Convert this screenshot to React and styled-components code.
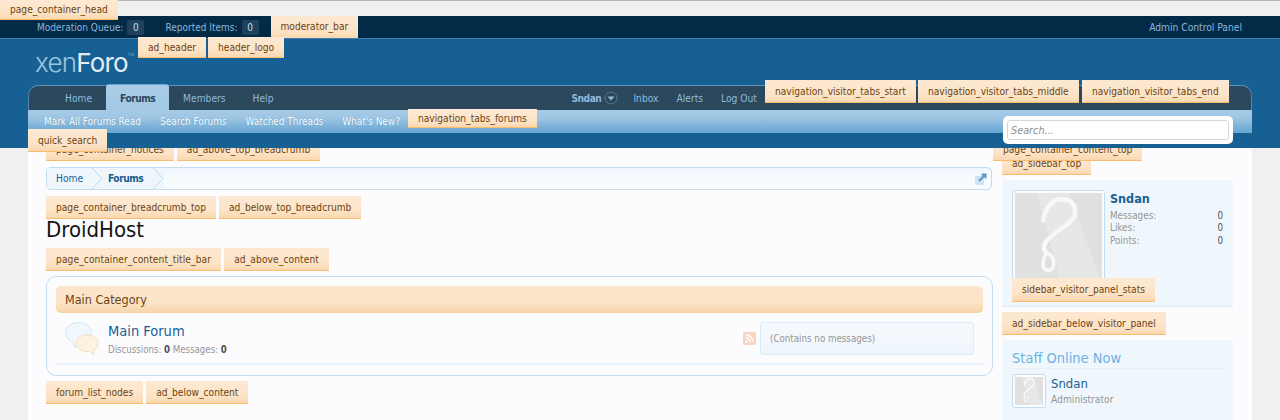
import React from 'react';
import styled, { createGlobalStyle } from 'styled-components';

const GlobalStyle = createGlobalStyle`
  html, body {
    margin: 0;
    padding: 0;
    background: #f0f0f0;
  }
  body {
    font-family: "DejaVu Sans Condensed", "DejaVu Sans", sans-serif;
    font-stretch: condensed;
    font-size: 10.2px;
    color: #141414;
  }
`;

const Page = styled.div`
  height: 420px;
  overflow: hidden;
  position: relative;
`;

const TopStrip = styled.div`
  height: 15px;
  border-top: 1px solid #b4b4b4;
  background: #f0f0f0;
`;

const Tag = styled.div`
  display: inline-flex;
  flex: none;
  align-items: center;
  height: 23px;
  padding: 0 10px;
  box-sizing: border-box;
  background: linear-gradient(to bottom, #fde9d2 0%, #fce4c8 65%, #f9d8b0 100%);
  border-bottom: 1px solid #f9bc6d;
  color: #6d4310;
  font-size: 10.15px;
  letter-spacing: ${(p) => p.$track || 0}px;
  white-space: nowrap;
`;

const FloatTag = styled(Tag)`
  position: absolute;
  left: ${(p) => p.$left}px;
  top: ${(p) => p.$top}px;
  height: ${(p) => p.$height || 23}px;
  z-index: ${(p) => p.$z || 5};
`;

const ModBar = styled.div`
  height: 22px;
  background: #032a46;
  display: flex;
  align-items: center;
  padding: 0 38px 0 37px;
  color: #8ab8dc;
  font-size: 10px;
`;

const ModItem = styled.span`
  display: flex;
  align-items: center;
  gap: 4px;
  margin-right: ${(p) => p.$gap}px;
`;

const Count = styled.span`
  background: #1f435e;
  color: #c4dcee;
  height: 15px;
  line-height: 15px;
  width: 17px;
  text-align: center;
  border-radius: 2px;
`;

const ModSpacer = styled.div`
  flex: 1;
`;

const AdminLink = styled.span`
  font-size: 10.2px;
`;

const Header = styled.header`
  position: relative;
  z-index: 2;
  height: 109px;
  background: #176093;
  border-top: 1px solid #3f7fae;
  padding: 0 28px;
`;

const LogoRow = styled.div`
  height: 46px;
  padding: 9px 0 0 7px;
  box-sizing: border-box;
`;

const Logo = styled.div`
  font-family: Inter, sans-serif;
  font-stretch: normal;
  font-weight: 300;
  font-size: 26px;
  line-height: 30px;
  letter-spacing: -0.8px;
  color: #9fc4de;
  b {
    font-weight: 400;
    color: #e3eef6;
  }
  sup {
    font-size: 4px;
    vertical-align: 16px;
    line-height: 0;
    letter-spacing: 0;
  }
`;

const Nav = styled.nav`
  height: 25px;
  box-sizing: border-box;
  background: #2b485c;
  border-top: 1px solid #5a92bd;
  border-left: 1px solid #4f86ae;
  border-right: 1px solid #4f86ae;
  border-radius: 10px 10px 0 0;
  display: flex;
  align-items: center;
  padding-left: 36px;
  color: #8fbadb;
`;

const NavTab = styled.span`
  margin-right: ${(p) => p.$gap ?? 27}px;
`;

const ActiveTab = styled.span`
  align-self: stretch;
  margin: -2px 14px 0 -13px;
  padding: 2px 0 0 14px;
  width: 63px;
  display: flex;
  align-items: center;
  background: linear-gradient(to bottom, #a9cde7, #a2c8e4);
  border-top: 1px solid #6ea6d0;
  color: #2b485c;
  font-weight: 700;
  letter-spacing: -0.5px;
  border-radius: 3px 3px 0 0;
  box-sizing: border-box;
`;

const NavGap = styled.div`
  width: 298px;
`;

const NavUser = styled.span`
  display: flex;
  align-items: center;
  gap: 3px;
  font-weight: 700;
  letter-spacing: -0.5px;
  margin-right: 15px;
`;

const SubNav = styled.div`
  height: 23px;
  background: linear-gradient(to bottom, #a6cbe7 0%, #9dc5e3 35%, #65a5d1 100%);
  display: flex;
  align-items: center;
  padding-left: 16px;
  gap: 19px;
  color: #fbfdff;
  font-size: 9.95px;
  text-shadow: 0 0 1px #5b93bd;
`;

const SearchBox = styled.div`
  position: absolute;
  left: 1003px;
  top: 77px;
  width: 230px;
  height: 28px;
  box-sizing: border-box;
  padding: 4px;
  background: #fff;
  border-radius: 5px;
  z-index: 3;
`;

const SearchInput = styled.div`
  height: 100%;
  box-sizing: border-box;
  border: 1px solid #d6d6d6;
  border-radius: 3px;
  padding: 0 3px;
  line-height: 19px;
  font-style: italic;
  font-size: 10.8px;
  color: #8f8f8f;
`;

const ContentArea = styled.main`
  margin: 0 28px;
  height: 300px;
  padding: 0 19px 0 18px;
  background: #fcfcff;
  display: flex;
  gap: 10px;
  position: relative;
  z-index: 1;
`;

const MainColumn = styled.section`
  width: 946px;
  margin-top: -10px;
`;

const TagRow = styled.div`
  display: flex;
  gap: 3px;
  height: 23px;
`;

const Breadcrumb = styled.div`
  margin: 6px 0;
  height: 23px;
  box-sizing: border-box;
  border: 1px solid #c2dcf0;
  border-radius: 5px;
  background: linear-gradient(to bottom, #f0f7fc, #fbfdff);
  display: flex;
  align-items: center;
`;

const CrumbTrail = styled.div`
  display: flex;
  align-items: stretch;
  align-self: stretch;
  background: #f0f7fc;
  border-radius: 4px 0 0 4px;
  padding-left: 9px;
`;

const Crumb = styled.span`
  display: flex;
  align-items: center;
  box-sizing: border-box;
  color: #176093;
  font-weight: ${(p) => (p.$current ? 700 : 400)};
  letter-spacing: ${(p) => (p.$current ? -0.5 : 0)}px;
  width: ${(p) => p.$width}px;
  padding-left: ${(p) => p.$pad || 0}px;
`;

const CrumbEdge = styled.svg`
  flex: none;
  display: block;
`;

const JumpIcon = styled.svg`
  margin-left: auto;
  margin-right: 3px;
`;

const PageTitle = styled.h1`
  margin: 0;
  height: 29px;
  font-family: "DejaVu Sans Condensed", "DejaVu Sans", sans-serif;
  font-weight: 400;
  font-size: 22px;
  line-height: 21px;
  color: #141414;
`;

const NodeBox = styled.div`
  margin: 5px 0;
  width: 947px;
  height: 100px;
  box-sizing: border-box;
  padding: 9px 9px 0;
  border: 1px solid #c2dcf0;
  border-radius: 10px;
`;

const CategoryBar = styled.div`
  height: 27px;
  box-sizing: border-box;
  padding: 0 9px;
  display: flex;
  align-items: center;
  border-radius: 5px;
  background: linear-gradient(to bottom, #fbe5cb 0%, #fbe4c9 60%, #f9d6ad 100%);
  border-bottom: 1px solid #f9d0a0;
  color: #6d4310;
  font-size: 12.5px;
`;

const ForumRow = styled.div`
  height: 52px;
  box-sizing: border-box;
  border-bottom: 2px solid #e8f3fc;
  display: flex;
  align-items: flex-start;
  padding: 9px 9px 0 9px;
`;

const ForumIcon = styled.svg`
  flex: none;
  margin-right: 9px;
`;

const ForumInfo = styled.div`
  flex: 1;
`;

const ForumTitle = styled.div`
  color: #176093;
  font-size: 14.5px;
  line-height: 17px;
  margin-top: 1px;
`;

const ForumStats = styled.div`
  color: #969696;
  font-size: 9.6px;
  margin-top: 4px;
  b {
    color: #505050;
  }
`;

const RssIcon = styled.svg`
  margin: 10px 4px 0 0;
  flex: none;
`;

const LastPost = styled.div`
  width: 214px;
  height: 33px;
  box-sizing: border-box;
  padding-left: 9px;
  display: flex;
  align-items: center;
  border: 1px solid #d7edfc;
  border-radius: 3px;
  background: linear-gradient(to bottom, #f6fafe, #eef5fb);
  color: #969696;
  font-size: 9.7px;
`;

const Sidebar = styled.aside`
  width: 231px;
  margin-top: -10px;
  position: relative;
`;

const SidebarTags = styled.div`
  height: 42px;
`;

const SidebarTopTag = styled(Tag)`
  margin-top: 14px;
  padding-top: 1px;
`;

const VisitorPanel = styled.div`
  height: 127px;
  box-sizing: border-box;
  padding: 10px 10px 0;
  background: #f0f7fc;
  border-bottom: 1px solid #d7edfc;
`;

const VisitorMain = styled.div`
  display: flex;
  gap: 5px;
`;

const Avatar = styled.div`
  flex: none;
  width: ${(p) => p.$size}px;
  height: ${(p) => p.$size}px;
  box-sizing: border-box;
  border: 1px solid #c2dcf0;
  padding: 2px;
  background: #fcfcff;
  border-radius: 3px;
  svg {
    display: block;
    width: 100%;
    height: 100%;
  }
`;

const VisitorInfo = styled.div`
  flex: 1;
`;

const VisitorName = styled.div`
  font-size: 12.5px;
  font-weight: 700;
  color: #176093;
  line-height: 17px;
  margin-bottom: 3px;
`;

const StatRow = styled.div`
  display: flex;
  justify-content: space-between;
  height: 12.3px;
  line-height: 12.3px;
  font-size: 9.8px;
  color: #969696;
  b {
    font-weight: 400;
    color: #505050;
  }
`;

const PanelTag = styled(Tag)`
  position: relative;
  height: 24px;
  margin-top: -5px;
`;

const SidebarTagRow = styled.div`
  margin: 5px 0;
  height: 23px;
  display: flex;
`;

const StaffPanel = styled.div`
  height: 90px;
  padding: 10px;
  background: #f0f7fc;
`;

const StaffHeading = styled.h3`
  margin: 0 0 5px;
  padding-bottom: 1px;
  border-bottom: 1px solid #e3f0fa;
  font-weight: 400;
  font-size: 14.5px;
  line-height: 17px;
  color: #6cb2e4;
`;

const StaffRow = styled.div`
  display: flex;
  gap: 5px;
`;

const StaffName = styled.div`
  font-size: 13px;
  color: #176093;
  line-height: 16px;
  margin-top: 2px;
`;

const StaffRole = styled.div`
  color: #969696;
  margin-top: 2px;
`;

function AvatarImage() {
  return (
    <svg viewBox="0 0 96 96" preserveAspectRatio="none">
      <rect width="96" height="96" fill="#e0e0e0" />
      <polygon points="24,0 60,0 94,96 50,96" fill="#e7e7e7" />
      <path
        d="M31 30 C33 18 40 8 50 7 C62 6 68 14 66 24 C63 36 38 44 33 56 C31 60 32 64 35 66"
        fill="none"
        stroke="#f8f8f8"
        strokeWidth="5"
        strokeLinecap="round"
      />
      <path d="M35 66 C42 68 44 76 42 82 C39 88 32 86 31 80 C30 74 33 70 35 66 Z" fill="none" stroke="#f8f8f8" strokeWidth="4" />
    </svg>
  );
}

function Bubbles() {
  return (
    <ForumIcon width="34" height="34" viewBox="0 0 34 34">
      <path
        d="M14 0.5 C21 0.5 26 5 26 11 C26 17 21 22 14 22 L12 23 L10 26 L8.5 20.5 C3.5 18.5 0.5 15 0.5 11 C0.5 5 6 0.5 14 0.5 Z"
        fill="#f0f7fd"
        stroke="#d5e7f5"
      />
      <path
        d="M22 13 C28.5 13 33 16.5 33 21 C33 24 31.5 26.5 29 28 L28.5 32.5 L24.5 29.5 L22 29.5 C16 29.5 11.5 26 11.5 21 C11.5 16.5 16 13 22 13 Z"
        fill="#fdf2e2"
        stroke="#f8dcb6"
      />
    </ForumIcon>
  );
}

function CrumbChevron({ color }) {
  return (
    <CrumbEdge width="11" height="21" viewBox="0 0 11 21">
      <polygon points="0,0 10,10.5 0,21" fill={color} />
      <polyline points="0,0 10,10.5 0,21" fill="none" stroke="#b9d8ee" strokeWidth="1" />
    </CrumbEdge>
  );
}

export default function App() {
  return (
    <Page>
      <GlobalStyle />
      <TopStrip />
      <FloatTag $left={0} $top={0} $height={20}>page_container_head</FloatTag>
      <ModBar>
        <ModItem $gap={21}>Moderation Queue: <Count>0</Count></ModItem>
        <ModItem $gap={12}>Reported Items: <Count>0</Count></ModItem>
        <Tag>moderator_bar</Tag>
        <ModSpacer />
        <AdminLink>Admin Control Panel</AdminLink>
      </ModBar>
      <Header>
        <FloatTag $left={138} $top={-2} $height={21}>ad_header</FloatTag>
        <FloatTag $left={208} $top={-2} $height={21}>header_logo</FloatTag>
        <LogoRow>
          <Logo>xen<b>Foro</b><sup>TM</sup></Logo>
        </LogoRow>
        <Nav>
          <NavTab>Home</NavTab>
          <ActiveTab>Forums</ActiveTab>
          <NavTab>Members</NavTab>
          <NavTab $gap={0}>Help</NavTab>
          <NavGap />
          <NavUser>
            Sndan
            <svg width="14" height="14" viewBox="0 0 14 14">
              <circle cx="7" cy="7" r="6" fill="none" stroke="#557a96" />
              <polygon points="3.5,5.5 10.5,5.5 7,9.5" fill="#8fbadb" />
            </svg>
          </NavUser>
          <NavTab $gap={18}>Inbox</NavTab>
          <NavTab $gap={18}>Alerts</NavTab>
          <NavTab $gap={0}>Log Out</NavTab>
        </Nav>
        <SubNav>
          <span>Mark All Forums Read</span>
          <span>Search Forums</span>
          <span>Watched Threads</span>
          <span>What's New?</span>
        </SubNav>
        <FloatTag $left={408} $top={70} $height={19}>navigation_tabs_forums</FloatTag>
        <FloatTag $left={765} $top={41}>navigation_visitor_tabs_start</FloatTag>
        <FloatTag $left={918} $top={41}>navigation_visitor_tabs_middle</FloatTag>
        <FloatTag $left={1082} $top={41}>navigation_visitor_tabs_end</FloatTag>
        <FloatTag $left={28} $top={90} $z={6}>quick_search</FloatTag>
        <SearchBox>
          <SearchInput>Search...</SearchInput>
        </SearchBox>
      </Header>
      <ContentArea>
        <MainColumn>
          <TagRow>
            <Tag>page_container_notices</Tag>
            <Tag>ad_above_top_breadcrumb</Tag>
          </TagRow>
          <Breadcrumb>
            <CrumbTrail>
              <Crumb $width={36}>Home</Crumb>
              <CrumbChevron color="#f0f7fc" />
              <Crumb $width={50} $pad={5} $current>Forums</Crumb>
              <CrumbChevron color="#f0f7fc" />
            </CrumbTrail>
            <JumpIcon width="14" height="14" viewBox="0 0 14 14">
              <rect x="1" y="4" width="9" height="9" rx="1.5" fill="#cfe3f3" />
              <path d="M5 9 L11 3 M7.5 2.5 H11.5 V6.5" fill="none" stroke="#5c96c4" strokeWidth="2" />
            </JumpIcon>
          </Breadcrumb>
          <TagRow>
            <Tag>page_container_breadcrumb_top</Tag>
            <Tag>ad_below_top_breadcrumb</Tag>
          </TagRow>
          <PageTitle>DroidHost</PageTitle>
          <TagRow>
            <Tag $track={0.1}>page_container_content_title_bar</Tag>
            <Tag $track={0.1}>ad_above_content</Tag>
          </TagRow>
          <NodeBox>
            <CategoryBar>Main Category</CategoryBar>
            <ForumRow>
              <Bubbles />
              <ForumInfo>
                <ForumTitle>Main Forum</ForumTitle>
                <ForumStats>Discussions: <b>0</b> Messages: <b>0</b></ForumStats>
              </ForumInfo>
              <RssIcon width="13" height="13" viewBox="0 0 13 13">
                <rect width="13" height="13" rx="2" fill="#f9d3bc" />
                <circle cx="3.5" cy="9.5" r="1.4" fill="#fff" />
                <path d="M2.5 5.5 A5 5 0 0 1 7.5 10.5 M2.5 2.8 A7.8 7.8 0 0 1 10.3 10.5" fill="none" stroke="#fff" strokeWidth="1.5" />
              </RssIcon>
              <LastPost>(Contains no messages)</LastPost>
            </ForumRow>
          </NodeBox>
          <TagRow>
            <Tag>forum_list_nodes</Tag>
            <Tag>ad_below_content</Tag>
          </TagRow>
        </MainColumn>
        <Sidebar>
          <FloatTag $left={-9} $top={0} $z={2}>page_container_content_top</FloatTag>
          <SidebarTags>
            <SidebarTopTag>ad_sidebar_top</SidebarTopTag>
          </SidebarTags>
          <VisitorPanel>
            <VisitorMain>
              <Avatar $size={93}><AvatarImage /></Avatar>
              <VisitorInfo>
                <VisitorName>Sndan</VisitorName>
                <StatRow>Messages: <b>0</b></StatRow>
                <StatRow>Likes: <b>0</b></StatRow>
                <StatRow>Points: <b>0</b></StatRow>
              </VisitorInfo>
            </VisitorMain>
            <PanelTag>sidebar_visitor_panel_stats</PanelTag>
          </VisitorPanel>
          <SidebarTagRow>
            <Tag>ad_sidebar_below_visitor_panel</Tag>
          </SidebarTagRow>
          <StaffPanel>
            <StaffHeading>Staff Online Now</StaffHeading>
            <StaffRow>
              <Avatar $size={34}><AvatarImage /></Avatar>
              <div>
                <StaffName>Sndan</StaffName>
                <StaffRole>Administrator</StaffRole>
              </div>
            </StaffRow>
          </StaffPanel>
        </Sidebar>
      </ContentArea>
    </Page>
  );
}
